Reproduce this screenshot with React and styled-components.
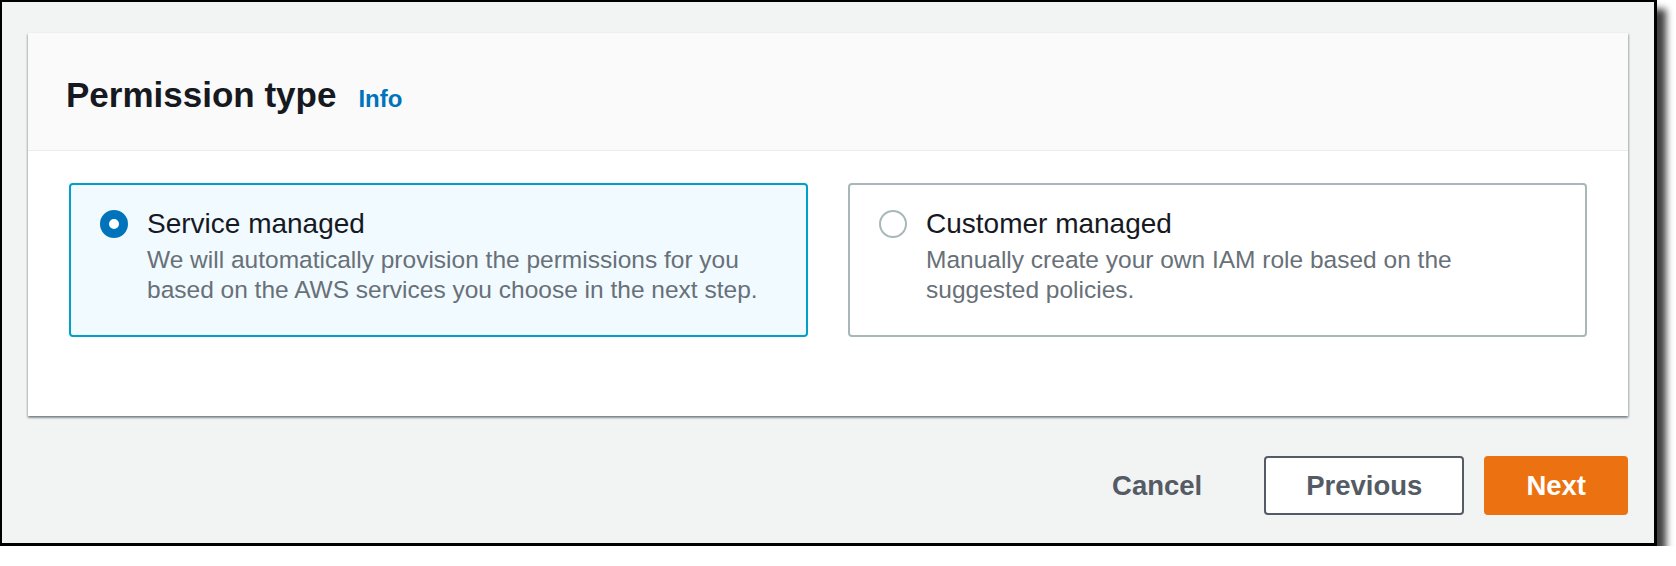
import React from 'react';
import styled, { createGlobalStyle } from 'styled-components';

const GlobalStyle = createGlobalStyle`
  body {
    margin: 0;
    background: #ffffff;
    font-family: "Liberation Sans", Arial, sans-serif;
  }
`;

const Frame = styled.div`
  width: 1657px;
  height: 546px;
  box-sizing: border-box;
  border-style: solid;
  border-color: #000;
  border-width: 2px 3px 3px 2px;
  background: #f2f3f3;
  box-shadow: 9px 9px 7px rgba(0, 0, 0, 0.75);
  padding: 31px 26px 27px;
  display: flex;
  flex-direction: column;
`;

const Card = styled.section`
  background: #fff;
  box-shadow: 0 2px 2px rgba(0, 28, 36, 0.35), 1px 1px 2px rgba(0, 28, 36, 0.2),
    -1px 1px 2px rgba(0, 28, 36, 0.15);
`;

const Header = styled.div`
  background: #fafafa;
  border-bottom: 1px solid #eaeded;
  padding: 42px 38px 35px;
  display: flex;
  align-items: baseline;
  gap: 22px;
`;

const Title = styled.h2`
  margin: 0;
  font-size: 35px;
  line-height: 40px;
  font-weight: 700;
  color: #16191f;
`;

const InfoLink = styled.a`
  font-size: 24px;
  font-weight: 700;
  color: #0073bb;
  text-decoration: none;
`;

const Body = styled.div`
  padding: 32px 41px 79px;
  display: grid;
  grid-template-columns: 1fr 1fr;
  gap: 40px;
`;

const Option = styled.label`
  display: flex;
  align-items: flex-start;
  gap: 19px;
  padding: 22px 29px 31px;
  border: 2px solid ${p => (p.$checked ? '#00a1c9' : '#aab7b8')};
  background: ${p => (p.$checked ? '#f1faff' : '#fff')};
  border-radius: 4px;
`;

const Radio = styled.span`
  flex: none;
  width: 28px;
  height: 28px;
  margin-top: 3px;
  box-sizing: border-box;
  border-radius: 50%;
  background: #fff;
  border: ${p => (p.$checked ? '9px solid #0073bb' : '2px solid #aab7b8')};
`;

const OptionText = styled.div`
  display: flex;
  flex-direction: column;
`;

const OptionLabel = styled.span`
  font-size: 28px;
  line-height: 34px;
  color: #16191f;
`;

const OptionDesc = styled.span`
  margin-top: 4px;
  font-size: 24.5px;
  line-height: 29.5px;
  color: #687078;
`;

const Footer = styled.div`
  display: flex;
  justify-content: flex-end;
  gap: 20px;
  padding-top: 40px;
`;

const Button = styled.button`
  height: 59px;
  padding: 0 40px;
  border-radius: 4px;
  font-family: "Liberation Sans", Arial, sans-serif;
  font-size: 27.5px;
  font-weight: 700;
  border: 2px solid
    ${p => (p.$variant === 'primary' ? '#ec7211' : p.$variant === 'normal' ? '#545b64' : 'transparent')};
  background: ${p => (p.$variant === 'primary' ? '#ec7211' : p.$variant === 'normal' ? '#fff' : 'transparent')};
  color: ${p => (p.$variant === 'primary' ? '#fff' : '#545b64')};
`;

const options = [
  {
    label: 'Service managed',
    desc: 'We will automatically provision the permissions for you based on the AWS services you choose in the next step.',
    checked: true,
  },
  {
    label: 'Customer managed',
    desc: 'Manually create your own IAM role based on the suggested policies.',
    checked: false,
  },
];

export default function App() {
  return (
    <>
      <GlobalStyle />
      <Frame>
        <Card>
          <Header>
            <Title>Permission type</Title>
            <InfoLink href="#">Info</InfoLink>
          </Header>
          <Body>
            {options.map(o => (
              <Option key={o.label} $checked={o.checked}>
                <Radio $checked={o.checked} />
                <OptionText>
                  <OptionLabel>{o.label}</OptionLabel>
                  <OptionDesc>{o.desc}</OptionDesc>
                </OptionText>
              </Option>
            ))}
          </Body>
        </Card>
        <Footer>
          <Button $variant="link">Cancel</Button>
          <Button $variant="normal">Previous</Button>
          <Button $variant="primary">Next</Button>
        </Footer>
      </Frame>
    </>
  );
}
